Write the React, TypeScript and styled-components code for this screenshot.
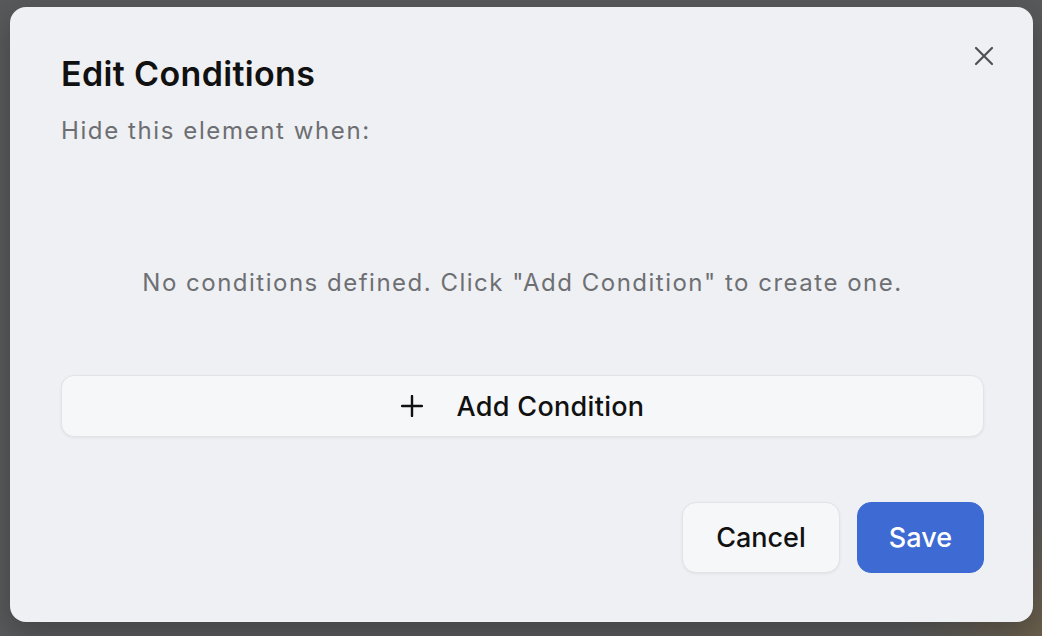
import styled, { createGlobalStyle } from "styled-components";

const GlobalStyle = createGlobalStyle`
  html, body {
    margin: 0;
    padding: 0;
    height: 100%;
  }
  body {
    font-family: Inter, "Noto Sans", "Liberation Sans", sans-serif;
    -webkit-font-smoothing: antialiased;
  }
  #root {
    height: 100%;
  }
`;

const Backdrop = styled.div`
  box-sizing: border-box;
  height: 636px;
  padding: 7px 9px 14px 10px;
  display: flex;
  background:
    radial-gradient(circle at 100% 100%, rgba(120, 98, 62, 0.55) 0, rgba(90, 90, 92, 0) 140px),
    #58595b;
`;

const Dialog = styled.div`
  position: relative;
  flex: 1;
  box-sizing: border-box;
  display: flex;
  flex-direction: column;
  padding: 47px 49px 49px 51px;
  background: #eef0f3;
  border-radius: 16px;
  box-shadow: 0 10px 30px rgba(0, 0, 0, 0.25);
`;

const CloseButton = styled.button`
  position: absolute;
  top: 32px;
  right: 32px;
  width: 34px;
  height: 34px;
  padding: 0;
  border: none;
  background: transparent;
  display: flex;
  align-items: center;
  justify-content: center;
  color: #4f5054;
  cursor: pointer;
`;

const Title = styled.h2`
  margin: 0;
  font-size: 34px;
  line-height: 40px;
  font-weight: 600;
  color: #111;
  letter-spacing: 0.35px;
`;

const Subtitle = styled.p`
  margin: 22px 0 0;
  font-size: 24px;
  line-height: 30px;
  letter-spacing: 1.6px;
  color: #6d6e72;
`;

const Empty = styled.div`
  flex: 1;
  display: flex;
  align-items: center;
  justify-content: center;
  padding-top: 44px;
  font-size: 24px;
  letter-spacing: 1.5px;
  color: #6e6f73;
`;

const AddButton = styled.button`
  height: 62px;
  width: 100%;
  display: flex;
  align-items: center;
  justify-content: center;
  gap: 34px;
  border: 1px solid #e1e3e6;
  border-radius: 13px;
  background: #f5f7f9;
  box-shadow: 0 1px 3px rgba(0, 0, 0, 0.06);
  font-family: inherit;
  font-size: 27px;
  font-weight: 500;
  letter-spacing: 0.3px;
  color: #111;
  cursor: pointer;
`;

const Footer = styled.div`
  display: flex;
  justify-content: flex-end;
  gap: 17px;
  margin-top: 65px;
`;

const FooterButton = styled.button<{ $primary?: boolean }>`
  height: 71px;
  padding: 0 ${(p) => (p.$primary ? "31px" : "33px")};
  border-radius: 14px;
  font-family: inherit;
  font-size: 27px;
  font-weight: 500;
  cursor: pointer;
  border: 1px solid ${(p) => (p.$primary ? "#3e6bd3" : "#e1e3e6")};
  background: ${(p) => (p.$primary ? "#3e6bd3" : "#f5f7f9")};
  color: ${(p) => (p.$primary ? "#fff" : "#111")};
  box-shadow: ${(p) => (p.$primary ? "none" : "0 1px 3px rgba(0, 0, 0, 0.06)")};
`;

const App = () => {
  return (
    <>
      <GlobalStyle />
      <Backdrop>
        <Dialog>
          <CloseButton aria-label="Close">
            <svg width="20" height="20" viewBox="0 0 20 20" fill="none" stroke="currentColor" strokeWidth="2.2" strokeLinecap="round">
              <path d="M2 2 L18 18 M18 2 L2 18" />
            </svg>
          </CloseButton>
          <Title>Edit Conditions</Title>
          <Subtitle>Hide this element when:</Subtitle>
          <Empty>No conditions defined. Click "Add Condition" to create one.</Empty>
          <AddButton>
            <svg width="22" height="22" viewBox="0 0 22 22" fill="none" stroke="currentColor" strokeWidth="2.4" strokeLinecap="round">
              <path d="M11 1 V21 M1 11 H21" />
            </svg>
            Add Condition
          </AddButton>
          <Footer>
            <FooterButton>Cancel</FooterButton>
            <FooterButton $primary>Save</FooterButton>
          </Footer>
        </Dialog>
      </Backdrop>
    </>
  );
};

export default App;
